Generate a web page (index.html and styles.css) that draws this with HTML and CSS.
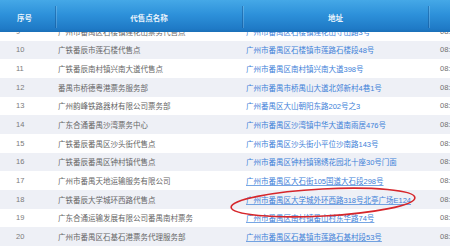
FILE: index.html
```html
<!DOCTYPE html>
<html lang="zh-CN">
<head>
<meta charset="utf-8">
<title>代售点列表</title>
<link rel="stylesheet" href="styles.css">
</head>
<body>
<div class="page">
  <div class="thead">
    <div class="th th-num">序号</div>
    <div class="th th-name">代售点名称</div>
    <div class="th th-addr">地址</div>
    <div class="th th-time"></div>
  </div>
  <div class="viewport">
    <div class="rows">
      <div class="row"><span class="c-num">9</span><span class="c-name">广州市番禺区石楼镇莲花山票务代售点</span><span class="c-addr">广州市番禺区石楼镇莲花山守山路3号</span><span class="c-time">08:00-20:00</span></div>
      <div class="row alt"><span class="c-num">10</span><span class="c-name">广铁番辰市莲石楼代售点</span><span class="c-addr">广州市番禺区石楼镇市莲路石楼段48号</span><span class="c-time">08:00-20:00</span></div>
      <div class="row"><span class="c-num">11</span><span class="c-name">广铁番辰南村镇兴南大道代售点</span><span class="c-addr">广州市番禺区南村镇兴南大道398号</span><span class="c-time">08:00-20:00</span></div>
      <div class="row alt"><span class="c-num">12</span><span class="c-name">番禺市桥德粤港票务服务部</span><span class="c-addr">广州市番禺市桥禺山大道北郊新村4巷1号</span><span class="c-time">08:00-20:00</span></div>
      <div class="row"><span class="c-num">13</span><span class="c-name">广州韵峰铁路器材有限公司票务部</span><span class="c-addr">广州番禺区大山朝阳东路202号之3</span><span class="c-time">08:00-20:00</span></div>
      <div class="row alt"><span class="c-num">14</span><span class="c-name">广东合通番禺沙湾票务中心</span><span class="c-addr">广州市番禺区沙湾镇中华大道南雨居476号</span><span class="c-time">08:00-20:00</span></div>
      <div class="row"><span class="c-num">15</span><span class="c-name">广铁番辰番禺区沙头街代售点</span><span class="c-addr">广州市番禺区沙头街小平位沙南路143号</span><span class="c-time">08:00-20:00</span></div>
      <div class="row alt"><span class="c-num">16</span><span class="c-name">广铁番辰番禺区钟村镇代售点</span><span class="c-addr">广州市番禺区钟村镇锦绣花园北十座30号门面</span><span class="c-time">08:00-20:00</span></div>
      <div class="row"><span class="c-num">17</span><span class="c-name">广州市番禺天地运输服务有限公司</span><span class="c-addr link">广州市番禺区大石街105国道大石段298号</span><span class="c-time">08:00-20:00</span></div>
      <div class="row alt"><span class="c-num">18</span><span class="c-name">广铁番辰大学城环西路代售点</span><span class="c-addr link">广州市番禺区大学城外环西路318号北亭广场E124</span><span class="c-time">08:00-20:00</span></div>
      <div class="row"><span class="c-num">19</span><span class="c-name">广东合通运输发展有限公司番禺南村票务</span><span class="c-addr link">广州市番禺区南村镇番山村东华路74号</span><span class="c-time">08:00-20:00</span></div>
      <div class="row alt"><span class="c-num">20</span><span class="c-name">广州市番禺区石基石港票务代理服务部</span><span class="c-addr link">广州市番禺区石基镇市莲路石基村段53号</span><span class="c-time">08:00-20:00</span></div>
    </div>
  </div>
  <svg class="mark" width="450" height="246" viewBox="0 0 450 246" aria-hidden="true">
    <ellipse cx="323" cy="202.5" rx="92" ry="13.5" transform="rotate(-3 323 202.5)" fill="none" stroke="#d6262b" stroke-width="1.6"/>
  </svg>
</div>
</body>
</html>
```

FILE: styles.css
```css
html, body {
  margin: 0;
  padding: 0;
  background: #fff;
}
body {
  width: 450px;
  height: 246px;
  overflow: hidden;
  font-family: "Liberation Sans", "Noto Sans CJK SC", sans-serif;
}
.page {
  position: relative;
  width: 450px;
  height: 246px;
  overflow: hidden;
}
.thead {
  display: grid;
  grid-template-columns: 55px 187px 186px 80px;
  height: 32px;
  background: linear-gradient(#45a8e7 0%, #2d91da 45%, #1f7ac6 90%, #1a70b8 100%);
}
.th {
  display: flex;
  align-items: center;
  margin: 6px 0 4px;
  color: #eaf4fc;
  font-family: "Noto Sans CJK SC", sans-serif;
  font-weight: bold;
  font-size: 7.5px;
}
.th-num {
  padding-left: 17px;
}
.th-name, .th-addr, .th-time {
  justify-content: center;
  border-left: 1px solid rgba(20, 80, 140, 0.45);
  box-shadow: inset 1px 0 0 rgba(255, 255, 255, 0.18);
}
.viewport {
  height: 214px;
  overflow: hidden;
}
.rows {
  margin-top: -10px;
}
.row {
  display: grid;
  grid-template-columns: 55px 187px 186px 80px;
  align-items: center;
  height: 18.67px;
  font-size: 7.5px;
  background: #fff;
  white-space: nowrap;
}
.row.alt {
  background: #eef0f6;
}
.row > span {
  overflow: hidden;
}
.c-num {
  padding-left: 16px;
  color: #7a7a7a;
}
.c-name {
  padding-left: 3px;
  color: #666;
}
.c-addr {
  padding-left: 4px;
  color: #3d80d8;
}
.c-addr.link {
  text-decoration: underline;
  text-decoration-color: rgba(61, 128, 216, 0.7);
}
.c-time {
  padding-left: 12px;
  color: #707070;
}
.mark {
  position: absolute;
  left: 0;
  top: 0;
  pointer-events: none;
}
```
